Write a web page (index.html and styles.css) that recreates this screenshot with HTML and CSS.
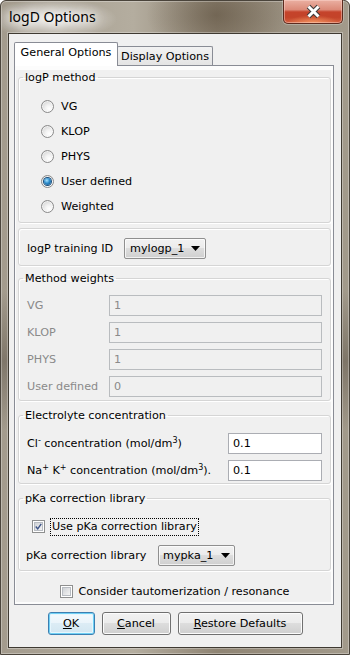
FILE: index.html
```html
<!DOCTYPE html>
<html lang="en">
<head>
    <meta charset="UTF-8">
    <meta name="viewport" content="width=device-width, initial-scale=1.0">
    <title>logD Options</title>
    <link rel="stylesheet" href="styles.css">
</head>
<body>
    <div class="window">
        <div class="titlebar">
            <span class="title">logD Options</span>
            <div class="close-btn">
                <svg width="17" height="15" viewBox="0 0 17 15">
                    <path d="M3.5 2.5 L13.5 12.5 M13.5 2.5 L3.5 12.5" stroke="#3b3b3b" stroke-width="5" fill="none"/>
                    <path d="M3.5 2.5 L13.5 12.5 M13.5 2.5 L3.5 12.5" stroke="#ffffff" stroke-width="3" fill="none"/>
                </svg>
            </div>
        </div>

        <div class="client">
            <div class="tabs">
                <div class="tab active">General Options</div>
                <div class="tab">Display Options</div>
            </div>

            <div class="pane">
                <div class="page">
                    <fieldset class="group">
                        <legend>logP method</legend>
                        <div class="radio-list">
                            <div class="radio-row"><span class="radio"></span>VG</div>
                            <div class="radio-row"><span class="radio"></span>KLOP</div>
                            <div class="radio-row"><span class="radio"></span>PHYS</div>
                            <div class="radio-row"><span class="radio checked"><span class="dot"></span></span>User defined</div>
                            <div class="radio-row"><span class="radio"></span>Weighted</div>
                        </div>
                    </fieldset>

                    <fieldset class="group plain">
                        <div class="field-row training">
                            <span class="label">logP training ID</span>
                            <div class="combo wide">mylogp_1<svg class="arrow" width="9" height="5" viewBox="0 0 9 5"><polygon points="0,0 9,0 4.5,5" fill="#000"/></svg></div>
                        </div>
                    </fieldset>

                    <fieldset class="group weights">
                        <legend>Method weights</legend>
                        <div class="rows">
                            <div class="field-row"><span class="label disabled">VG</span><div class="input disabled">1</div></div>
                            <div class="field-row"><span class="label disabled">KLOP</span><div class="input disabled">1</div></div>
                            <div class="field-row"><span class="label disabled">PHYS</span><div class="input disabled">1</div></div>
                            <div class="field-row"><span class="label disabled">User defined</span><div class="input disabled">0</div></div>
                        </div>
                    </fieldset>

                    <fieldset class="group electrolyte">
                        <legend>Electrolyte concentration</legend>
                        <div class="rows">
                            <div class="field-row"><span class="label">Cl<sup>-</sup> concentration (mol/dm<sup>3</sup>)</span><div class="input">0.1</div></div>
                            <div class="field-row"><span class="label">Na<sup>+</sup> K<sup>+</sup> concentration (mol/dm<sup>3</sup>).</span><div class="input">0.1</div></div>
                        </div>
                    </fieldset>

                    <fieldset class="group pka">
                        <legend>pKa correction library</legend>
                        <div class="pka-body">
                            <div class="check-row">
                                <span class="checkbox"><span class="box"><svg width="9" height="9" viewBox="0 0 9 9"><path d="M1 4.5 L3.5 7.5 L8 1" stroke="#3d5386" stroke-width="1.8" fill="none"/></svg></span></span>
                                <span class="focus">Use pKa correction library</span>
                            </div>
                            <div class="field-row library">
                                <span class="label">pKa correction library</span>
                                <div class="combo narrow">mypka_1<svg class="arrow" width="9" height="5" viewBox="0 0 9 5"><polygon points="0,0 9,0 4.5,5" fill="#000"/></svg></div>
                            </div>
                        </div>
                    </fieldset>

                    <div class="check-row centered">
                        <span class="checkbox"><span class="box"></span></span>
                        <span>Consider tautomerization / resonance</span>
                    </div>
                </div>
            </div>

            <div class="buttons">
                <button class="btn default"><u>O</u>K</button>
                <button class="btn cancel"><u>C</u>ancel</button>
                <button class="btn restore"><u>R</u>estore Defaults</button>
            </div>
        </div>
    </div>
</body>
</html>
```

FILE: styles.css
```css
* {
    box-sizing: border-box;
}
body {
    margin: 0;
    width: 350px;
    height: 655px;
    overflow: hidden;
    font-family: "DejaVu Sans", Tahoma, sans-serif;
    font-size: 11.2px;
    color: #000;
}
.window {
    width: 350px;
    height: 655px;
    display: flex;
    flex-direction: column;
    padding: 0 7px 6px 7px;
    border: 1px solid #4a443b;
    border-radius: 6px 6px 0 0;
    background-color: #9a9182;
    background-image:
        radial-gradient(ellipse 64px 20px at 52px 18px, rgba(255,255,255,0.8), rgba(255,255,255,0)),
        radial-gradient(ellipse 70px 40px at 215px 14px, rgba(80,66,48,0.45), rgba(80,66,48,0)),
        linear-gradient(180deg, rgba(0,0,0,0) 290px, rgba(60,50,40,0.35) 360px, rgba(0,0,0,0) 430px),
        linear-gradient(90deg, #a39b8d, #b4ad9f 38%, #8f8473 62%, #a29a8b 100%);
    box-shadow: inset 0 0 0 1px rgba(255,255,255,0.3);
}
.titlebar {
    height: 32px;
    flex-shrink: 0;
    display: flex;
    justify-content: space-between;
    align-items: flex-start;
}
.title {
    font-family: "Noto Sans", "Open Sans", sans-serif;
    font-size: 14px;
    line-height: 20px;
    margin: 6px 0 0 1px;
    color: #000;
    text-shadow: 0 0 8px #fff, 0 0 12px #fff, 0 0 16px rgba(255,255,255,0.8);
}
.close-btn {
    width: 60px;
    height: 24px;
    margin: -1px -1px 0 0;
    display: flex;
    align-items: center;
    justify-content: center;
    border: 1px solid #5c2a1e;
    border-top: none;
    border-radius: 0 0 5px 5px;
    background:
        radial-gradient(ellipse 26px 8px at 50% 100%, rgba(255,170,110,0.7), rgba(255,170,110,0)),
        linear-gradient(180deg, #eab0a2 0%, #dc8a78 42%, #c5432b 52%, #c34329 75%, #d4603f 100%);
    box-shadow: inset 0 0 0 1px rgba(255,220,210,0.45), 0 0 0 1px rgba(255,255,255,0.25);
}
.client {
    height: 615px;
    display: flex;
    flex-direction: column;
    padding: 8px 0 0 5px;
    background: #f0f0f0;
    border: 1px solid #3f3a32;
    box-shadow: 0 0 0 1px rgba(255,255,255,0.3);
}
.tabs {
    display: flex;
    align-items: flex-end;
    height: 24px;
    flex-shrink: 0;
}
.tab {
    height: 20px;
    width: 96px;
    margin-left: -1px;
    text-align: center;
    line-height: 19px;
    border: 1px solid #898c95;
    border-bottom: none;
    border-radius: 2px 2px 0 0;
    background: linear-gradient(180deg, #f2f2f2, #e3e3e3);
}
.tab.active {
    position: relative;
    z-index: 1;
    height: 24px;
    width: 104px;
    margin-left: 0;
    line-height: 20px;
    background: #fff;
}
.pane {
    width: 320px;
    height: 540px;
    margin-top: -1px;
    border: 1px solid #898c95;
    background: #fcfcfc;
    padding: 4px 2px 2px 1px;
}
.page {
    height: 100%;
    background: #f0f0f0;
    padding: 0 0 0 2px;
    display: flex;
    flex-direction: column;
}
.group {
    margin: 0;
    padding: 0;
    min-width: 0;
    border: 1px solid #d5d5d5;
    border-radius: 3px;
    box-shadow: inset 1px 1px 0 #fff, 1px 1px 0 #fff;
}
.group legend {
    margin-left: 4px;
    padding: 0 2px;
    line-height: 15px;
}
.radio-list {
    padding: 9px 0 3px 22px;
}
.radio-row {
    height: 25px;
    display: flex;
    align-items: center;
    gap: 7px;
}
.radio {
    width: 13px;
    height: 13px;
    border-radius: 50%;
    border: 1px solid #8a8a8a;
    background: radial-gradient(circle at 65% 70%, #ffffff 0, #f2f2f2 35%, #c9c9c9 100%);
    box-shadow: inset 0 0 0 1px rgba(255,255,255,0.6);
    display: flex;
    align-items: center;
    justify-content: center;
}
.radio .dot {
    width: 7px;
    height: 7px;
    border-radius: 50%;
    background: radial-gradient(circle at 40% 35%, #a8e4ff 0, #2d8ccc 45%, #0b4677 100%);
    box-shadow: 0 0 0 1px #1c4f7c;
}
.group.plain {
    margin-top: 5px;
    padding: 9px 0 6px 8px;
}
.field-row {
    display: flex;
    align-items: center;
}
.label {
    flex-shrink: 0;
    white-space: nowrap;
}
.training .label {
    width: 97px;
}
.combo {
    height: 21px;
    display: flex;
    align-items: center;
    justify-content: space-between;
    border: 1px solid #8f8f8f;
    border-radius: 2px;
    background: linear-gradient(180deg, #f2f2f2 0%, #ebebeb 50%, #dddddd 50%, #cfcfcf 100%);
    box-shadow: inset 0 0 0 1px rgba(255,255,255,0.7);
}
.combo.wide {
    width: 82px;
    padding: 0 5px 0 5px;
}
.combo.narrow {
    width: 77px;
    padding: 0 4px 0 4px;
}
.group.weights {
    margin-top: 5px;
}
.rows {
    display: flex;
    flex-direction: column;
    gap: 6px;
    padding: 9px 8px 3px 8px;
}
.weights .label {
    width: 82px;
}
.input {
    height: 21px;
    line-height: 19px;
    padding: 0 4px;
    background: #fff;
    border: 1px solid #abadb3;
}
.weights .input {
    flex: 1;
}
.input.disabled {
    background: #f0f0f0;
    border-color: #b9bcbf;
    color: #8a8a8a;
}
.label.disabled {
    color: #8a8a8a;
}
.group.electrolyte {
    margin-top: 7px;
}
.electrolyte .rows {
    padding-top: 10px;
    padding-bottom: 2px;
}
.electrolyte .label {
    width: 201px;
}
.electrolyte .input {
    width: 94px;
}
sup {
    font-size: 8px;
    line-height: 0;
    vertical-align: 4px;
}
.group.pka {
    margin-top: 7px;
}
.pka-body {
    padding: 12px 0 4px 13px;
}
.check-row {
    display: flex;
    align-items: center;
    gap: 6px;
    height: 17px;
}
.checkbox {
    width: 13px;
    height: 13px;
    border: 1px solid #8e8f8f;
    background: #fff;
    padding: 1px;
}
.checkbox .box {
    display: flex;
    align-items: center;
    justify-content: center;
    width: 100%;
    height: 100%;
    border: 1px solid #b8bcc2;
    background: linear-gradient(135deg, #cfd2d6, #f4f4f4);
}
.focus {
    outline: 1px dotted #000;
    padding: 1px 1px 2px 1px;
}
.library {
    margin: 10px 0 0 -6px;
}
.library .label {
    width: 132px;
}
.check-row.centered {
    justify-content: center;
    margin-top: 12px;
}
.buttons {
    display: flex;
    justify-content: center;
    gap: 7px;
    margin-top: 7px;
    padding-right: 5px;
}
.btn {
    height: 23px;
    padding: 0;
    font-family: inherit;
    font-size: 11.2px;
    color: #000;
    border: 1px solid #707070;
    border-radius: 3px;
    background: linear-gradient(180deg, #f2f2f2 0%, #ebebeb 50%, #dddddd 50%, #cfcfcf 100%);
    box-shadow: inset 0 0 0 1px #fcfcfc;
}
.btn.default {
    width: 47px;
    border-color: #3c7fb1;
    background: linear-gradient(180deg, #f4fafd 0%, #eaf4fa 50%, #dcecf5 50%, #d2e6f1 100%);
    box-shadow: inset 0 0 0 1px #6fd0f5, inset 0 0 0 2px #e6f6fd;
}
.btn.cancel {
    width: 69px;
}
.btn.restore {
    width: 125px;
}
```
